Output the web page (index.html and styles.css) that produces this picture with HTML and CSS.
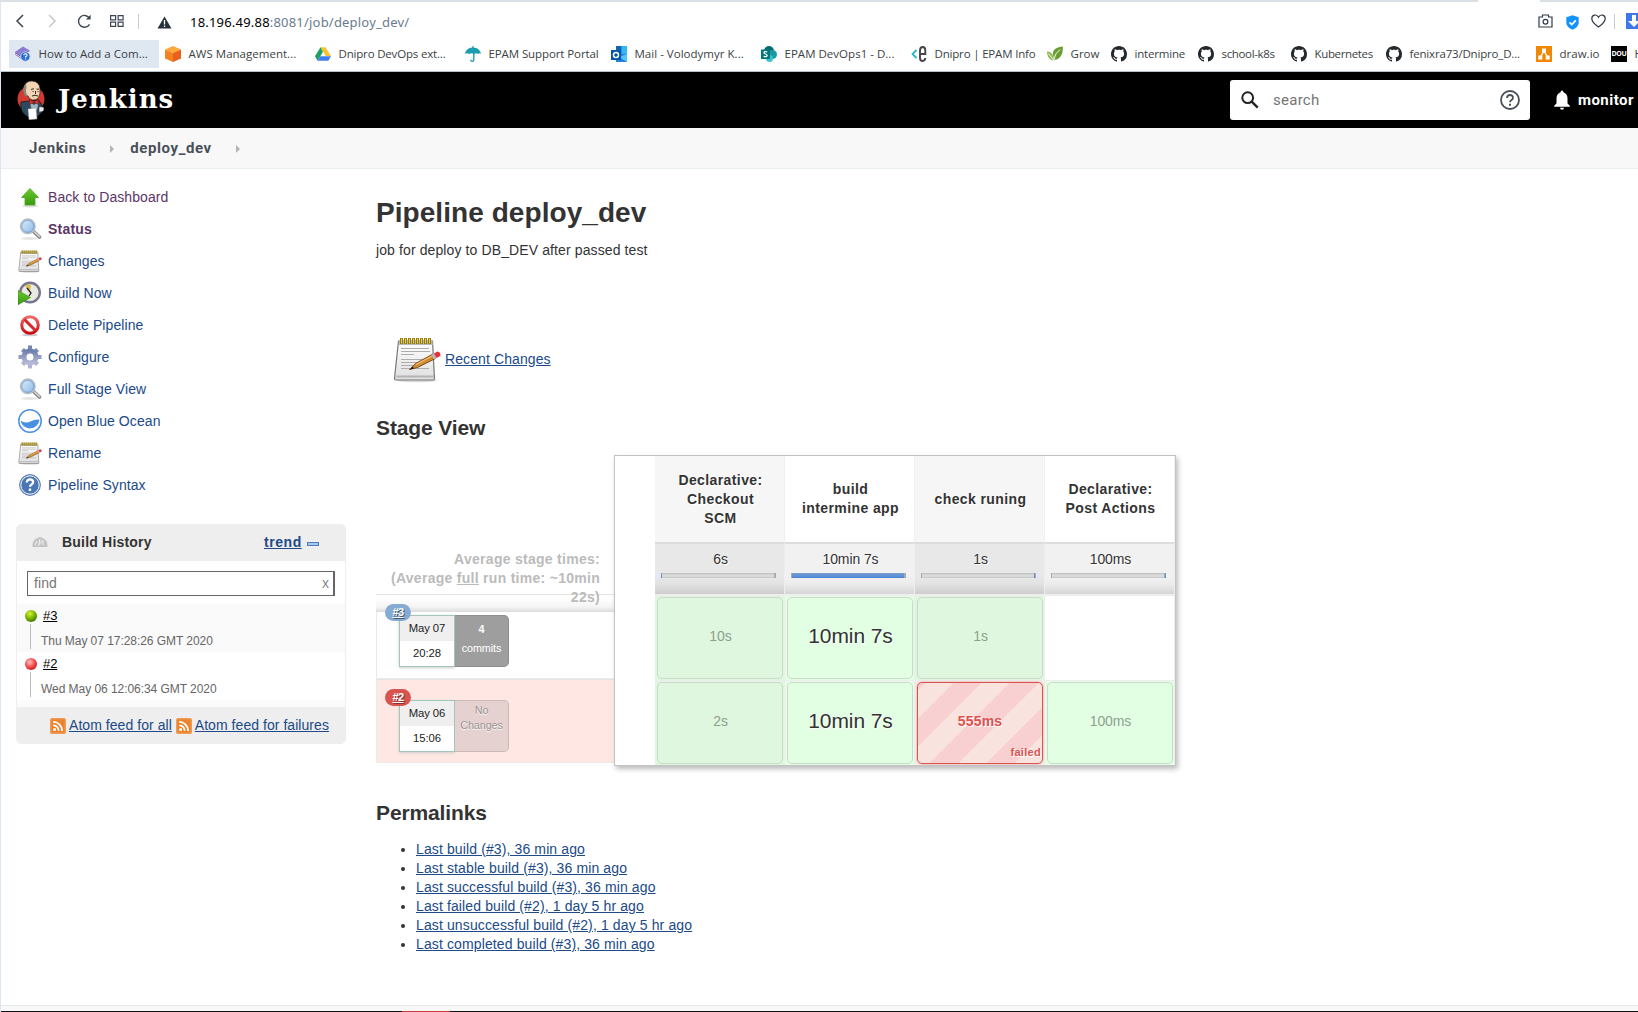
FILE: index.html
```
<!DOCTYPE html>
<html lang="en">
<head>
<meta charset="utf-8">
<title>deploy_dev [Jenkins]</title>
<link rel="stylesheet" href="styles.css">
</head>
<body>
<svg class="defs" width="0" height="0" aria-hidden="true">
  <defs>
    <linearGradient id="gGreen" x1="0" y1="0" x2="0" y2="1"><stop offset="0" stop-color="#6cc82e"/><stop offset="1" stop-color="#379a10"/></linearGradient>
    <linearGradient id="gLens" x1="0" y1="0" x2="1" y2="1"><stop offset="0" stop-color="#e4f1fd"/><stop offset="1" stop-color="#86b4e4"/></linearGradient>
    <linearGradient id="gPaper" x1="0" y1="0" x2="0" y2="1"><stop offset="0" stop-color="#ffffff"/><stop offset="1" stop-color="#dedede"/></linearGradient>
    <linearGradient id="gGear" x1="0" y1="0" x2="0" y2="1"><stop offset="0" stop-color="#6e80ae"/><stop offset="1" stop-color="#b8b8d6"/></linearGradient>
    <linearGradient id="gRed" x1="0" y1="0" x2="0" y2="1"><stop offset="0" stop-color="#ee6a6a"/><stop offset="1" stop-color="#c80d12"/></linearGradient>
    <radialGradient id="gBallG" cx=".4" cy=".3" r=".7"><stop offset="0" stop-color="#d8f23a"/><stop offset=".6" stop-color="#78b400"/><stop offset="1" stop-color="#3f7d00"/></radialGradient>
    <radialGradient id="gBallR" cx=".4" cy=".35" r=".7"><stop offset="0" stop-color="#ffc4c4"/><stop offset=".6" stop-color="#f2474a"/><stop offset="1" stop-color="#c8181c"/></radialGradient>
    <symbol id="lens" viewBox="0 0 24 24">
      <ellipse cx="12" cy="21.500" rx="9" ry="1.500" fill="#e6e6e6"/>
      <path d="M15.500 14.500l6 5.500" stroke="#858585" stroke-width="3.600" stroke-linecap="round"/>
      <path d="M16.500 15l5 4.500" stroke="#dcdcdc" stroke-width="1.600" stroke-linecap="round"/>
      <circle cx="9.800" cy="9.300" r="7.300" fill="url(#gLens)" stroke="#b9bdc2" stroke-width="1.400"/>
      <circle cx="9.800" cy="9.300" r="6" fill="none" stroke="#6f9fd6" stroke-width=".9"/>
    </symbol>
    <symbol id="pad" viewBox="-1 -1 48 48">
      <ellipse cx="23" cy="44.500" rx="20" ry="1.800" fill="#dcdcdc"/>
      <path d="M4.500 5h34l2 37.500q0 1.500-1.500 1.500h-37q-1.500 0-1.500-1.500z" fill="url(#gPaper)" stroke="#777" stroke-width="1.200"/>
      <path d="M5 5h33.500l.3 4h-34.100z" fill="#b9b9b9"/>
      <path d="M2.500 40.500h37" stroke="#b4b4b4" stroke-width="2"/>
      <path d="M7 12.500h28M7 15.500h29M7 18.500h13M7 23.500h28M7 26.500h22M7 29.500h15M7 32.500h28" stroke="#adadad"/>
      <path d="M6 5h32" stroke="#8a7412" stroke-width="6" stroke-dasharray="3 1"/>
      <path d="M7.500 2.500v5m4-5v5m4-5v5m4-5v5m4-5v5m4-5v5m4-5v5m4-5v5" stroke="#e8cf3c" stroke-width="1.200"/>
      <path d="M15.500 33.500l6-6L39 18l2.500 4.500-18 9z" fill="#d08b34" stroke="#6f4610" stroke-width=".9"/>
      <path d="M22 28.500l17-9" stroke="#f2bf72" stroke-width="1.200"/>
      <path d="M15.500 33.500l3.200-3 1.300 2z" fill="#222"/>
      <path d="M37.500 18.700l2.500-1.300 2.600 4.600-2.500 1.300z" fill="#b9b9c4"/>
      <path d="M40 17.400l3.500-1.900q3.500.5 2.800 4.500l-3.900 2z" fill="#e8303a"/>
    </symbol>
    <symbol id="github" viewBox="0 0 16 16"><path fill="#24292e" d="M8 0C3.580 0 0 3.580 0 8c0 3.540 2.290 6.530 5.470 7.590.4.070.55-.17.55-.38 0-.19-.01-.82-.01-1.490-2.010.37-2.530-.49-2.690-.94-.09-.23-.48-.94-.82-1.130-.28-.15-.68-.52-.01-.53.63-.01 1.080.58 1.230.82.72 1.210 1.870.87 2.330.66.07-.52.28-.87.51-1.070-1.780-.2-3.640-.89-3.640-3.950 0-.87.31-1.590.82-2.150-.08-.2-.36-1.020.08-2.120 0 0 .67-.21 2.200.82.64-.18 1.320-.27 2-.27s1.360.09 2 .27c1.530-1.040 2.200-.82 2.200-.82.44 1.100.16 1.920.08 2.120.51.56.82 1.270.82 2.150 0 3.070-1.870 3.750-3.650 3.950.29.25.54.73.54 1.480 0 1.070-.01 1.930-.01 2.200 0 .21.15.46.55.38A8.010 8.010 0 0 0 16 8c0-4.420-3.580-8-8-8z"/></symbol>
    <symbol id="rss" viewBox="0 0 16 16">
      <rect width="16" height="16" rx="2.500" fill="#e8842e"/><rect x=".8" y=".8" width="14.400" height="14.400" rx="2" fill="none" stroke="#f6b070" stroke-width=".8"/>
      <circle cx="4.600" cy="11.500" r="1.500" fill="#fff"/><path d="M3.200 7.300a5.500 5.500 0 0 1 5.500 5.500M3.200 3.900a9 9 0 0 1 9 9" fill="none" stroke="#fff" stroke-width="1.800"/>
    </symbol>
  </defs>
</svg>

<div class="tabstrip"><span class="tab-gap"></span></div>

<div class="toolbar">
  <svg class="nav-back" width="10" height="14" viewBox="0 0 10 14"><path d="M8 1L2 7l6 6" fill="none" stroke="#3b4650" stroke-width="1.500"/></svg>
  <svg class="nav-fwd" width="10" height="14" viewBox="0 0 10 14"><path d="M2 1l6 6-6 6" fill="none" stroke="#c4c8cc" stroke-width="1.500"/></svg>
  <svg class="nav-reload" width="15" height="15" viewBox="0 0 15 15"><path d="M12.500 10.300A5.900 5.900 0 1 1 12.300 4" fill="none" stroke="#3b4650" stroke-width="1.400"/><path d="M13.600.8v4.700H8.900z" fill="#3b4650"/></svg>
  <svg class="nav-dial" width="14" height="12" viewBox="0 0 14 12"><path d="M.6.6h5v4.200h-5zM8.100.6h5v4.200h-5zM.6 7.100h5v4.200h-5zM8.100 7.100h5v4.200h-5z" fill="none" stroke="#3b4650" stroke-width="1.200"/></svg>
  <span class="divider"></span>
  <svg class="warn" width="15" height="13" viewBox="0 0 15 13"><path d="M7.500.5L14.500 12.500H.5z" fill="#24303c"/><path d="M7.500 4v4.500M7.500 9.500v1.500" stroke="#fff" stroke-width="1.300"/></svg>
  <span class="url"><span class="host">18.196.49.88</span>:8081/job/deploy_dev/</span>
  <div class="toolbar-right">
    <svg width="15" height="14" viewBox="0 0 15 14"><path d="M1 3h3.500V1h6v2H14v10H1z" fill="none" stroke="#2e3a46" stroke-width="1.200"/><circle cx="7.500" cy="7.700" r="2.400" fill="none" stroke="#2e3a46" stroke-width="1.200"/></svg>
    <svg class="shield" width="13" height="15" viewBox="0 0 13 15"><path d="M6.500.3l6.200 2v6Q12 12.500 6.500 14.800 1 12.500.3 8.300v-6z" fill="#1493ff"/><path d="M3.500 7.300l2.300 2.300 4-4.200" fill="none" stroke="#fff" stroke-width="1.700"/></svg>
    <svg class="heart" width="15" height="14" viewBox="0 0 15 14"><path d="M7.500 13C4 10.500.8 7.800.8 4.400.8 1 5.500-.5 7.500 3.200 9.500-.5 14.200 1 14.200 4.400c0 3.400-3.200 6.100-6.700 8.600z" fill="none" stroke="#2e3a46" stroke-width="1.200"/></svg>
    <span class="divider"></span>
    <svg class="dl" width="16" height="16" viewBox="0 0 16 16"><rect width="16" height="16" fill="#3c78e8"/><path d="M6 2h4v6h4l-6 6-6-6h4z" fill="#fff"/></svg>
  </div>
</div>

<div class="bookmarks">
  <span class="bm w150 active"><svg width="16" height="16" viewBox="0 0 17 16"><path d="M8.500 0l7.500 4.500-8 6.500-8-5z" fill="#8d7cd0"/><path d="M0 6l8 5v3l-8-5.500z" fill="#6a55ae"/><path d="M0 7.500l8 5.200" stroke="#fff" stroke-width=".8"/><circle cx="11" cy="10.700" r="5" fill="#2f6fd0" stroke="#cfe0f6" stroke-width=".8"/><path d="M9.300 9.300q.3-1.600 1.900-1.500 1.700.2 1.500 1.700-.2.900-1.500 1.400v.8M11.200 12.700v1.200" stroke="#fff" stroke-width="1.200" fill="none"/></svg>How to Add a Com...</span>
  <span class="bm w150"><svg width="16" height="16" viewBox="0 0 16 16"><path d="M8 0l8 3.400L8 7 0 3.400z" fill="#ffa93c"/><path d="M0 3.400L8 7v9L0 12.600z" fill="#f58220"/><path d="M16 3.400L8 7v9l8-3.400z" fill="#e8611c"/></svg>AWS Management...</span>
  <span class="bm w150 tight"><svg width="16" height="16" viewBox="0 0 16 16"><path d="M5.500 1.200h5L16 10.300h-5.200z" fill="#fbc02d"/><path d="M5.500 1.200L8 5.700 2.600 14.800 0 10.300z" fill="#1da15f"/><path d="M5.300 10.300H16l-2.600 4.500H2.600z" fill="#3f7ef0"/></svg>Dnipro DevOps ext...</span>
  <span class="bm w146 snug"><svg width="16" height="16" viewBox="0 0 16 16"><path d="M0 7.800C.5 4 4 1.800 7.400 1.500V0h1.200v1.500C12 1.800 15.500 4 16 7.800q-1.500-1-3 .2-1.700-1.300-3.500-.2v5.700q0 2.500-2.200 2.500T5 13.700h1.400q0 1.100.9 1.100.8 0 .8-1.300V7.800q-2-1.100-3.600.2Q2 6.800 0 7.800z" fill="#1a9db0"/></svg>EPAM Support Portal</span>
  <span class="bm w150"><svg width="16" height="16" viewBox="0 0 16 16"><rect x="5" y="0" width="11" height="8" fill="#35b8f1"/><path d="M5 0h5.500v8H5z" fill="#1066b5"/><path d="M5 8h11v8H5z" fill="#1b85d9"/><path d="M16 8v8L8 11z" fill="#54c6f5"/><rect y="4" width="10" height="10" fill="#0a57a8"/><circle cx="5" cy="9" r="2.500" fill="none" stroke="#fff" stroke-width="1.400"/></svg>Mail - Volodymyr K...</span>
  <span class="bm w150"><svg width="16" height="16" viewBox="0 0 16 16"><circle cx="8" cy="5" r="5" fill="#036c70"/><circle cx="11.500" cy="8.500" r="4.500" fill="#1a9ba1"/><circle cx="8.500" cy="12.500" r="3.500" fill="#37c6d0"/><rect y="3.500" width="9" height="9.500" fill="#03787c"/><path d="M6.300 6Q3 5 3 6.800c0 1.400 3.200 1 3.200 2.700Q6 11.300 2.700 10.300" fill="none" stroke="#fff" stroke-width="1.300"/></svg>EPAM DevOps1 - D...</span>
  <span class="bm w136 tight"><svg width="16" height="16" viewBox="0 0 16 16"><path d="M5.500 4L1.500 8l4 4" fill="none" stroke="#22b8d0" stroke-width="1.800"/><path d="M14.300 12q-.3 3-2.700 3-2.600 0-2.600-3V4.500Q9 1 11.700 1q2.600 0 2.600 3.500V8H9" fill="none" stroke="#464547" stroke-width="1.900"/></svg>Dnipro | EPAM Info</span>
  <span class="bm w64"><svg width="16" height="16" viewBox="0 0 16 16"><path d="M15.800.5C9 1 5.500 4 6 8c.3 2.500 1 3.500.5 6 6 0 9.800-5 9.300-13.500z" fill="#6a9e32"/><path d="M0 5.500c3 0 5.500 1.500 6 4.500.2 1.500 0 3 .3 4.500C2.500 14 .3 10.500 0 5.500z" fill="#8ab84c"/><path d="M6.800 14Q8 7 13 3.500M1.500 7.500l4.500 6" stroke="#fff" stroke-width=".9" fill="none"/></svg>Grow</span>
  <span class="bm w87 tight"><svg width="16" height="16"><use href="#github"/></svg>intermine</span>
  <span class="bm w93 tighter"><svg width="16" height="16"><use href="#github"/></svg>school-k8s</span>
  <span class="bm w95 tighter"><svg width="16" height="16"><use href="#github"/></svg>Kubernetes</span>
  <span class="bm w150 tight"><svg width="16" height="16"><use href="#github"/></svg>fenixra73/Dnipro_D...</span>
  <span class="bm w75"><svg width="16" height="16" viewBox="0 0 16 16"><rect width="16" height="16" fill="#f08705"/><path d="M8 5L4.500 11M8 5l3.500 6" stroke="#fff" stroke-width="1.400"/><path d="M6 2.500h4v4H6zM2.300 9.500h4v4h-4zM9.700 9.500h4v4h-4z" fill="#fff"/></svg>draw.io</span>
  <span class="bm"><span class="dou">DOU</span>H</span>
</div>

<header class="jheader">
  <svg class="butler" width="28" height="40" viewBox="0 0 28 40">
    <ellipse cx="14" cy="19" rx="13.500" ry="13" fill="#cf3a33"/>
    <path d="M4 22q-1 8 3 12l4 3h9l5-5q1-9-4-12z" fill="#2e4a5e" stroke="#111" stroke-width=".7"/>
    <path d="M7 8Q8 .8 15 1q7.500.5 8 8 .5 5-1.500 8.500-2 3-6 2.500-3-.5-4.500-4Q6 15 7 8z" fill="#f0d4b4" stroke="#3a2a20" stroke-width=".7"/>
    <path d="M7.500 5Q4.500 10 8 16l2 .5Q8 11 9.500 5.500z" fill="#8b8378"/>
    <path d="M14 9.500l3-.8M19.500 9l2.500.3M15.500 11.500h1M20.500 11.500h1M18.500 11v3M15 16q3-1.500 6 0" stroke="#3a2a20" stroke-width="1" fill="none"/>
    <path d="M12 21l5 4 5-4-2 9h-5z" fill="#9fb4c2"/>
    <path d="M12.500 19.500l4.500 2 4.500-2v5l-4.500-2-4.500 2z" fill="#d33833" stroke="#600" stroke-width=".5"/>
    <path d="M11 29l8-1 1 11-8 .7z" fill="#fff" stroke="#999" stroke-width=".5"/>
    <path d="M22 27q5-1 5 2 0 3-5 3z" fill="#e8e8e8" stroke="#333" stroke-width=".5"/>
  </svg>
  <span class="wordmark">Jenkins</span>
  <div class="search">
    <svg class="search-mag" width="18" height="18" viewBox="0 0 18 18"><circle cx="6.700" cy="6.700" r="5.400" fill="none" stroke="#222" stroke-width="2"/><path d="M10.700 10.700l6 6" stroke="#222" stroke-width="2.400"/></svg>
    <span class="search-text">search</span>
    <svg class="search-help" width="20" height="20" viewBox="0 0 20 20"><circle cx="10" cy="10" r="9" fill="none" stroke="#4a5058" stroke-width="1.800"/><path d="M7 8q.2-3 3-3t3 2.700q0 1.300-1.500 2.300T10 12.300" fill="none" stroke="#4a5058" stroke-width="1.800"/><path d="M10 13.800v2" stroke="#4a5058" stroke-width="2"/></svg>
  </div>
  <svg class="bell" width="16" height="20" viewBox="0 0 16 20"><path d="M8 .5q1.400 0 1.400 1.700Q13.500 3.500 13.500 8.500v5l2.300 2.300v1H.2v-1l2.300-2.300v-5Q2.500 3.500 6.600 2.200 6.600.5 8 .5z" fill="#fff"/><path d="M6 17.800h4Q9.800 19.700 8 19.700T6 17.800z" fill="#fff"/></svg>
  <span class="user">monitor</span>
</header>

<nav class="crumbs">
  <span>Jenkins</span><i class="arrow"></i><span>deploy_dev</span><i class="arrow"></i>
</nav>

<div class="page">
  <aside class="side">
    <ul class="tasks">
      <li class="visited"><svg width="24" height="24" viewBox="0 0 24 24"><ellipse cx="12" cy="21" rx="8" ry="1.500" fill="#ddd"/><path d="M12 3.500l8.500 9H17v7.500H7v-7.500H3.500z" fill="url(#gGreen)" stroke="#4ea21e" stroke-width=".8"/></svg>Back to Dashboard</li>
      <li class="visited current"><svg width="24" height="24"><use href="#lens"/></svg>Status</li>
      <li><svg width="24" height="24"><use href="#pad"/></svg>Changes</li>
      <li><svg width="24" height="24" viewBox="0 0 24 24"><circle cx="12" cy="11.500" r="9.800" fill="#e9e9e2" stroke="#77778f" stroke-width="2.400"/><path d="M12 11.500L7 5q3-2.200 6-1.500z" fill="#d9bf4a"/><path d="M9 7l4 5-2 3" stroke="#222" stroke-width="1.300" fill="none"/><path d="M0 9.500L12.500 16.500 0 23.800z" fill="url(#gGreen)" stroke="#2f8810" stroke-width=".6"/></svg>Build Now</li>
      <li><svg width="24" height="24" viewBox="0 0 24 24"><ellipse cx="12" cy="22" rx="8" ry="1.300" fill="#ccc"/><circle cx="12" cy="12" r="8.300" fill="#fafafa" stroke="url(#gRed)" stroke-width="3"/><path d="M6.500 6.500l11 11" stroke="#d8262b" stroke-width="3"/></svg>Delete Pipeline</li>
      <li><svg width="24" height="24" viewBox="0 0 24 24"><g fill="url(#gGear)"><path d="M10 .5h4v4h-4zM10 19.500h4v4h-4zM.5 10h4v4h-4zM19.500 10h4v4h-4z"/><path d="M3 6l3-3 3.500 3.500-3 3zM21 6l-3-3-3.500 3.500 3 3zM3 18l3 3 3.500-3.500-3-3zM21 18l-3 3-3.500-3.500 3-3z"/></g><circle cx="12" cy="12" r="6" fill="none" stroke="url(#gGear)" stroke-width="5"/></svg>Configure</li>
      <li><svg width="24" height="24"><use href="#lens"/></svg>Full Stage View</li>
      <li><svg width="24" height="24" viewBox="0 0 24 24"><circle cx="12" cy="12" r="11.200" fill="#fff" stroke="#4a90e2" stroke-width="1.500"/><path d="M2.500 11.500q4.500 3.500 10 1 4.500-2.500 9-1.800A9.600 9.600 0 0 1 2.500 11.500z" fill="#4a90e2"/></svg>Open Blue Ocean</li>
      <li><svg width="24" height="24"><use href="#pad"/></svg>Rename</li>
      <li><svg width="24" height="24" viewBox="0 0 24 24"><circle cx="12" cy="12" r="10.400" fill="#4a76b4" stroke="#5e7fae" stroke-width="1"/><circle cx="12" cy="12" r="9.200" fill="none" stroke="#fff" stroke-width="1"/><path d="M8.800 9.500q.2-3.200 3.300-3.200 3 .1 3 2.800 0 1.500-1.600 2.400-1.500.8-1.500 2.300M12 15.500V18" fill="none" stroke="#fff" stroke-width="2.300"/></svg>Pipeline Syntax</li>
    </ul>

    <section class="history">
      <div class="history-head">
        <svg width="16" height="12" viewBox="0 0 16 12"><path d="M.5 11Q0 4 4.500 2.500 8-.5 11.500 2.500 16 4.500 15.500 11z" fill="#c4c4c4"/><path d="M3 9l2-4M7 8l1-5M11 9V4M6 10l4-5" stroke="#f4f4f4" stroke-width="1"/></svg>
        <span class="history-title">Build History</span>
        <a class="trend">trend</a>
        <i class="minus"></i>
      </div>
      <div class="find"><span>find</span><span class="clear">x</span></div>
      <div class="build odd">
        <div class="build-top"><svg width="12" height="12" viewBox="0 0 12 12"><circle cx="6" cy="6" r="6" fill="url(#gBallG)"/></svg><a>#3</a></div>
        <div class="build-date">Thu May 07 17:28:26 GMT 2020</div>
      </div>
      <div class="build">
        <div class="build-top"><svg width="12" height="12" viewBox="0 0 12 12"><circle cx="6" cy="6" r="6" fill="url(#gBallR)"/></svg><a>#2</a></div>
        <div class="build-date">Wed May 06 12:06:34 GMT 2020</div>
      </div>
      <div class="history-foot">
        <svg width="16" height="16"><use href="#rss"/></svg><a>Atom feed for all</a>
        <svg width="16" height="16"><use href="#rss"/></svg><a>Atom feed for failures</a>
      </div>
    </section>
  </aside>

  <main class="main">
    <h1>Pipeline deploy_dev</h1>
    <p class="desc">job for deploy to DB_DEV after passed test</p>
    <div class="recent"><svg width="48" height="48"><use href="#pad"/></svg><a>Recent Changes</a></div>
    <h2>Stage View</h2>

    <div class="stages">
      <div class="runs">
        <div class="avg-label">Average stage times:<br>(Average <u>full</u> run time: ~10min 22s)</div>
        <div class="run">
          <div class="run-box"><div class="when"><span>May 07</span><span>20:28</span></div><div class="commits"><b>4</b><span>commits</span></div><a class="badge">#3</a></div>
        </div>
        <div class="run failed">
          <div class="run-box"><div class="when"><span>May 06</span><span>15:06</span></div><div class="commits none"><span>No<br>Changes</span></div><a class="badge">#2</a></div>
        </div>
      </div>

      <div class="panel">
        <div class="col odd">
          <div class="name">Declarative:<br>Checkout<br>SCM</div>
          <div class="avg"><span>6s</span><div class="bar"><i style="width:1px"></i></div></div>
          <div class="cell"><div class="box dim">10s</div></div>
          <div class="cell"><div class="box dim">2s</div></div>
        </div>
        <div class="col">
          <div class="name">build<br>intermine app</div>
          <div class="avg"><span>10min 7s</span><div class="bar"><i style="margin-left:1px;width:112px"></i></div></div>
          <div class="cell"><div class="box big">10min 7s</div></div>
          <div class="cell"><div class="box big">10min 7s</div></div>
        </div>
        <div class="col odd">
          <div class="name">check runing</div>
          <div class="avg"><span>1s</span><div class="bar"><i style="margin-left:113px;width:1px"></i></div></div>
          <div class="cell"><div class="box dim">1s</div></div>
          <div class="cell fail"><div class="box">555ms<span class="fail-note">failed</span></div></div>
        </div>
        <div class="col">
          <div class="name">Declarative:<br>Post Actions</div>
          <div class="avg"><span>100ms</span><div class="bar"><i style="margin-left:114px;width:1px"></i></div></div>
          <div class="cell empty"></div>
          <div class="cell"><div class="box dim">100ms</div></div>
        </div>
      </div>
    </div>

    <h2 class="perma">Permalinks</h2>
    <ul class="links">
      <li><a>Last build (#3), 36 min ago</a></li>
      <li><a>Last stable build (#3), 36 min ago</a></li>
      <li><a>Last successful build (#3), 36 min ago</a></li>
      <li><a>Last failed build (#2), 1 day 5 hr ago</a></li>
      <li><a>Last unsuccessful build (#2), 1 day 5 hr ago</a></li>
      <li><a>Last completed build (#3), 36 min ago</a></li>
    </ul>
  </main>
</div>
<footer class="footer"></footer>
<div class="edge"></div>
</body>
</html>
```
FILE: styles.css
```
* { box-sizing: border-box; }
html, body { margin: 0; overflow: hidden; }
body {
  width: 1638px; height: 1012px; display: flex; flex-direction: column;
  border-left: 1px solid #dfe6f3; background: #fff; color: #333;
  font: 14px/19px "Liberation Sans", Arial, sans-serif; letter-spacing: .1px;
}
svg { flex: none; display: block; }
.defs { position: absolute; }
h1, h2, p, ul { margin: 0; padding: 0; }
ul { list-style: none; }
a { color: #204a87; text-decoration: underline; }

/* browser chrome */
.tabstrip { height: 2px; background: #dadfe3; flex: none; }
.tab-gap { display: block; width: 62px; height: 2px; margin-left: 1477px; background: #fff; }
.toolbar { height: 38px; flex: none; display: flex; align-items: center; padding-left: 14px; }
.nav-fwd { margin-left: 22px; }
.nav-reload { margin-left: 20px; }
.nav-dial { margin-left: 18px; }
.divider { width: 1px; height: 15px; background: #c8ccd0; margin-left: 14px; flex: none; }
.warn { margin: 2px 0 0 18px; }
.url { margin: 2px 0 0 18px; font: 13px/18px "Noto Sans", sans-serif; letter-spacing: .2px; color: #687c90; white-space: nowrap; }
.host { color: #000; }
.toolbar-right { margin-left: auto; width: 100px; display: flex; align-items: center; flex: none; overflow: hidden; }
.shield { margin: 2px 0 0 13px; }
.heart { margin-left: 12px; }
.toolbar-right .divider { margin-left: 8px; }
.dl { margin-left: 11px; }
.bookmarks { height: 32px; flex: none; display: flex; padding-left: 8px; border-bottom: 1px solid #b5c2ca; overflow: hidden; white-space: nowrap; font: 11.5px/28px "Open Sans", "Noto Sans", sans-serif; letter-spacing: .02px; color: #3a3f44; }
.bm { height: 28px; flex: none; display: flex; align-items: center; gap: 7.5px; padding-left: 6px; }
.bm.active { background: #dfe7f1; }
.w150 { width: 150px; } .w146 { width: 146px; } .w136 { width: 136px; } .w64 { width: 64px; }
.w87 { width: 87px; } .w93 { width: 93px; } .w95 { width: 95px; } .w75 { width: 75px; }
.snug { letter-spacing: -.1px; }
.tight { letter-spacing: -.18px; }
.tighter { letter-spacing: -.35px; }
.dou { width: 16px; height: 16px; background: #000; color: #fff; font: bold 7px/16px "Open Sans", sans-serif; text-align: center; letter-spacing: -.3px; }

/* jenkins header */
.jheader { height: 56px; flex: none; background: #000; display: flex; align-items: center; color: #fff; white-space: nowrap; overflow: hidden; }
.butler { margin-left: 16px; }
.wordmark { margin: 0 0 3px 13px; width: 120px; font: bold 26px/32px "DejaVu Serif", Georgia, serif; letter-spacing: 1px; }
.search { width: 300px; height: 40px; margin-left: 1052px; background: #fff; border-radius: 3px; display: flex; align-items: center; flex: none; padding: 0 10px 0 11px; }
.search-text { margin-left: 14px; font: 15px/20px Roboto, sans-serif; letter-spacing: .26px; color: #757575; }
.search-help { margin-left: auto; }
.bell { margin-left: 24px; }
.user { margin-left: 8px; font: bold 15px/20px Roboto, sans-serif; letter-spacing: .45px; }
.crumbs { height: 41px; flex: none; background: #f8f8f8; border-bottom: 1px solid #e9efef; display: flex; align-items: center; padding: 0 0 1px 28px; font: bold 15px/20px Roboto, sans-serif; letter-spacing: .6px; color: #4a5058; }
.arrow { width: 0; height: 0; border: 4px solid transparent; border-left-color: #b4b4b4; border-right: 0; margin: 2px 16px 0 24px; }

/* sidebar */
.page { flex: 1; display: flex; min-height: 0; }
.side { width: 375px; flex: none; padding: 12px 0 0 15px; }
.tasks li { height: 32px; display: flex; align-items: center; gap: 6px; padding-left: 2px; color: #204a87; letter-spacing: .08px; }
.tasks .visited { color: #5c3566; }
.tasks .current { font-weight: bold; letter-spacing: .2px; }
.history { width: 330px; height: 220px; margin-top: 23px; border: 1px solid #eee; border-radius: 5px; background: #fbfbfb; overflow: hidden; display: flex; flex-direction: column; }
.history-head { height: 36px; flex: none; background: #eee; display: flex; align-items: center; padding: 0 0 2px 15px; font-weight: bold; letter-spacing: .2px; }
.history-title { margin-left: 14px; width: 202px; }
.trend { letter-spacing: .55px; }
.minus { width: 12px; height: 4px; margin: 4px 0 0 5px; background: #a9c6ec; border: 1px solid #4f7fc0; }
.find { height: 43px; flex: none; background: #fff; border: solid #fff; border-width: 10px 10px 8px 10px; position: relative; display: flex; align-items: center; justify-content: space-between; padding: 0 6px 0 7px; color: #777; }
.find::before { content: ""; position: absolute; inset: 0; border: 1px solid #666; border-right-width: 2px; }
.clear { color: #888; }
.build { height: 48px; flex: none; background: #fff; padding-left: 8px; }
.build.odd { background: #fafafa; }
.build-top { display: flex; align-items: center; gap: 6px; height: 24px; font-size: 13px; }
.build-top a { color: #000; letter-spacing: -.1px; margin-top: -2px; }
.build-date { margin: -4px 0 0 5px; padding: 8px 0 0 10px; height: 25px; border-left: 1px solid #bbb; font-size: 12px; line-height: 18px; letter-spacing: -.05px; color: #666; }
.build-top svg { position: relative; z-index: 1; }
.history-foot { margin-top: 7px; flex: 1; background: #eee; display: flex; align-items: center; padding: 2px 0 0 33px; white-space: nowrap; letter-spacing: .05px; }
.history-foot a { margin: -2px 4px 0 3px; }

/* main column */
.main { flex: 1; padding-top: 28px; }
h1 { font-size: 28px; line-height: 32px; letter-spacing: .06px; }
.desc { margin-top: 11px; line-height: 20px; letter-spacing: .11px; }
.recent { margin: 75px 0 0 17px; height: 48px; display: flex; align-items: center; gap: 4px; }
h2 { font-size: 21px; line-height: 24px; margin-top: 33px; letter-spacing: -.12px; }
.stages { margin-top: 15px; height: 311px; display: grid; grid-template-columns: 238px 562px; }
.runs { display: flex; flex-direction: column; }
.avg-label { height: 157px; padding: 95px 14px 0 10px; text-align: right; font-weight: bold; letter-spacing: .28px; color: #bbb; background: linear-gradient(#e4e4e4, #e4e4e4) 0 139px / 100% 1px no-repeat, linear-gradient(#fff 20%, #f4f4f4 70%, #dcdcdc) 0 140px / 100% 17px no-repeat; }
.run { height: 67px; border: solid #eaeaea; border-width: 0 0 1px 1px; padding: 3px 0 0 22px; }
.run.failed { height: 84px; border-top: 1px solid #e4e4e4; background: #ffe8e3; padding-top: 20px; }
.run-box { position: relative; width: 110px; height: 52px; display: flex; font-size: 11.3px; letter-spacing: -.1px; text-align: center; }
.when { width: 56px; border: 1px solid #9fc8b7; background: #fff; display: flex; flex-direction: column; line-height: 24px; color: #222; box-shadow: 0 1px 3px #ccc; }
.when span { height: 26px; }
.when span:first-child { background: #efefef; height: 25px; line-height: 25px; }
.commits { width: 54px; background: #9e9e9e; border: 1px solid #8e8e8e; border-left: 0; border-radius: 0 5px 5px 0; color: #fff; font-size: 10.8px; display: flex; flex-direction: column; line-height: 19px; padding-top: 4px; }
.commits.none { background: #e5d1cf; border-color: #ccb8b4; color: #9b9493; line-height: 15px; padding-top: 2px; text-shadow: 0 1px 1px #fff; }
.badge { position: absolute; left: -14px; top: -11px; width: 26px; height: 17px; border-radius: 9px; background: #85abd2; color: #fff; font-weight: bold; font-size: 11px; line-height: 16px; letter-spacing: -.5px; text-shadow: 1px 1px 0 #456; }
.failed .badge { background: #d9534f; text-shadow: 1px 1px 0 #833; }

/* stage grid */
.panel { border: 1px solid #c4c4c4; background: #fff; box-shadow: 2px 3px 5px #bbb; padding-left: 40px; display: flex; }
.col { width: 130px; flex: none; text-shadow: 1px 1px 0 #fff; }
.name { height: 86px; border-right: 1px solid #f0f0f0; padding-left: 2px; display: flex; align-items: center; justify-content: center; text-align: center; font-weight: bold; letter-spacing: .4px; white-space: nowrap; }
.odd .name { background: #f6f6f6; }
.avg { height: 53px; border: solid #eee; border-width: 2px 1px 1px 0; border-top-color: #ddd; padding: 6px 0 0 6px; background: linear-gradient(#f1f1f1 65%, #ececec 80%, #d6d6d6); letter-spacing: -.1px; }
.odd .avg { background: linear-gradient(#e8e8e8 65%, #e2e2e2 80%, #cdcdcd); }
.avg span { display: block; text-align: center; padding-right: 4px; }
.bar { width: 115px; height: 5px; margin-top: 4px; background: linear-gradient(#bbb, #dcdcdc 40%, #d8d8d8 70%, #c4c4c4); border: solid #aaa; border-width: 0 2px 0 1px; }
.bar i { display: block; height: 5px; background: linear-gradient(#7a9fd0, #4b86d8); position: relative; left: -1px; }
.cell { height: 85px; border: solid #eee; border-width: 1px 1px 0 0; background: #e3ffe3; padding: 1px 1px 1px 2px; }
.odd .cell { background: #def7de; }
.box { height: 82px; border: 1px solid #ccd8cc; border-radius: 5px; display: flex; align-items: center; justify-content: center; padding-bottom: 3px; position: relative; }
.dim { color: #8f9f8f; letter-spacing: -.1px; text-shadow: none; padding-left: 1px; }
.big { font-size: 21px; letter-spacing: -.09px; padding: 0 0 6px 1px; }
.cell.empty { background: #fff; }
.col .cell.fail { background: #f3ecea; }
.fail .box { border-color: #d9534f; color: #d9534f; font-weight: bold; letter-spacing: .2px; box-shadow: 0 0 2px #e08884; background: repeating-linear-gradient(135deg, #f8d0d2 0 5px, #f8e3de 5px 25px, #f8d0d2 25px 40px); }
.fail-note { position: absolute; right: 1px; bottom: 3px; font-size: 11px; line-height: 16px; letter-spacing: .3px; }

.perma { margin-top: 35px; }
.links { margin-top: 15px; }
.links li { height: 19px; display: flex; align-items: center; padding-left: 25px; letter-spacing: .12px; }
.links li::before { content: ""; width: 4px; height: 4px; border-radius: 50%; background: #333; margin-right: 11px; }

.footer { height: 6px; flex: none; background: #f8f8f8; border-top: 1px solid #e4eaea; }
.edge { height: 1px; flex: none; background: linear-gradient(90deg, #111 401px, #c8383c 401px 449px, #111 449px); }
```
